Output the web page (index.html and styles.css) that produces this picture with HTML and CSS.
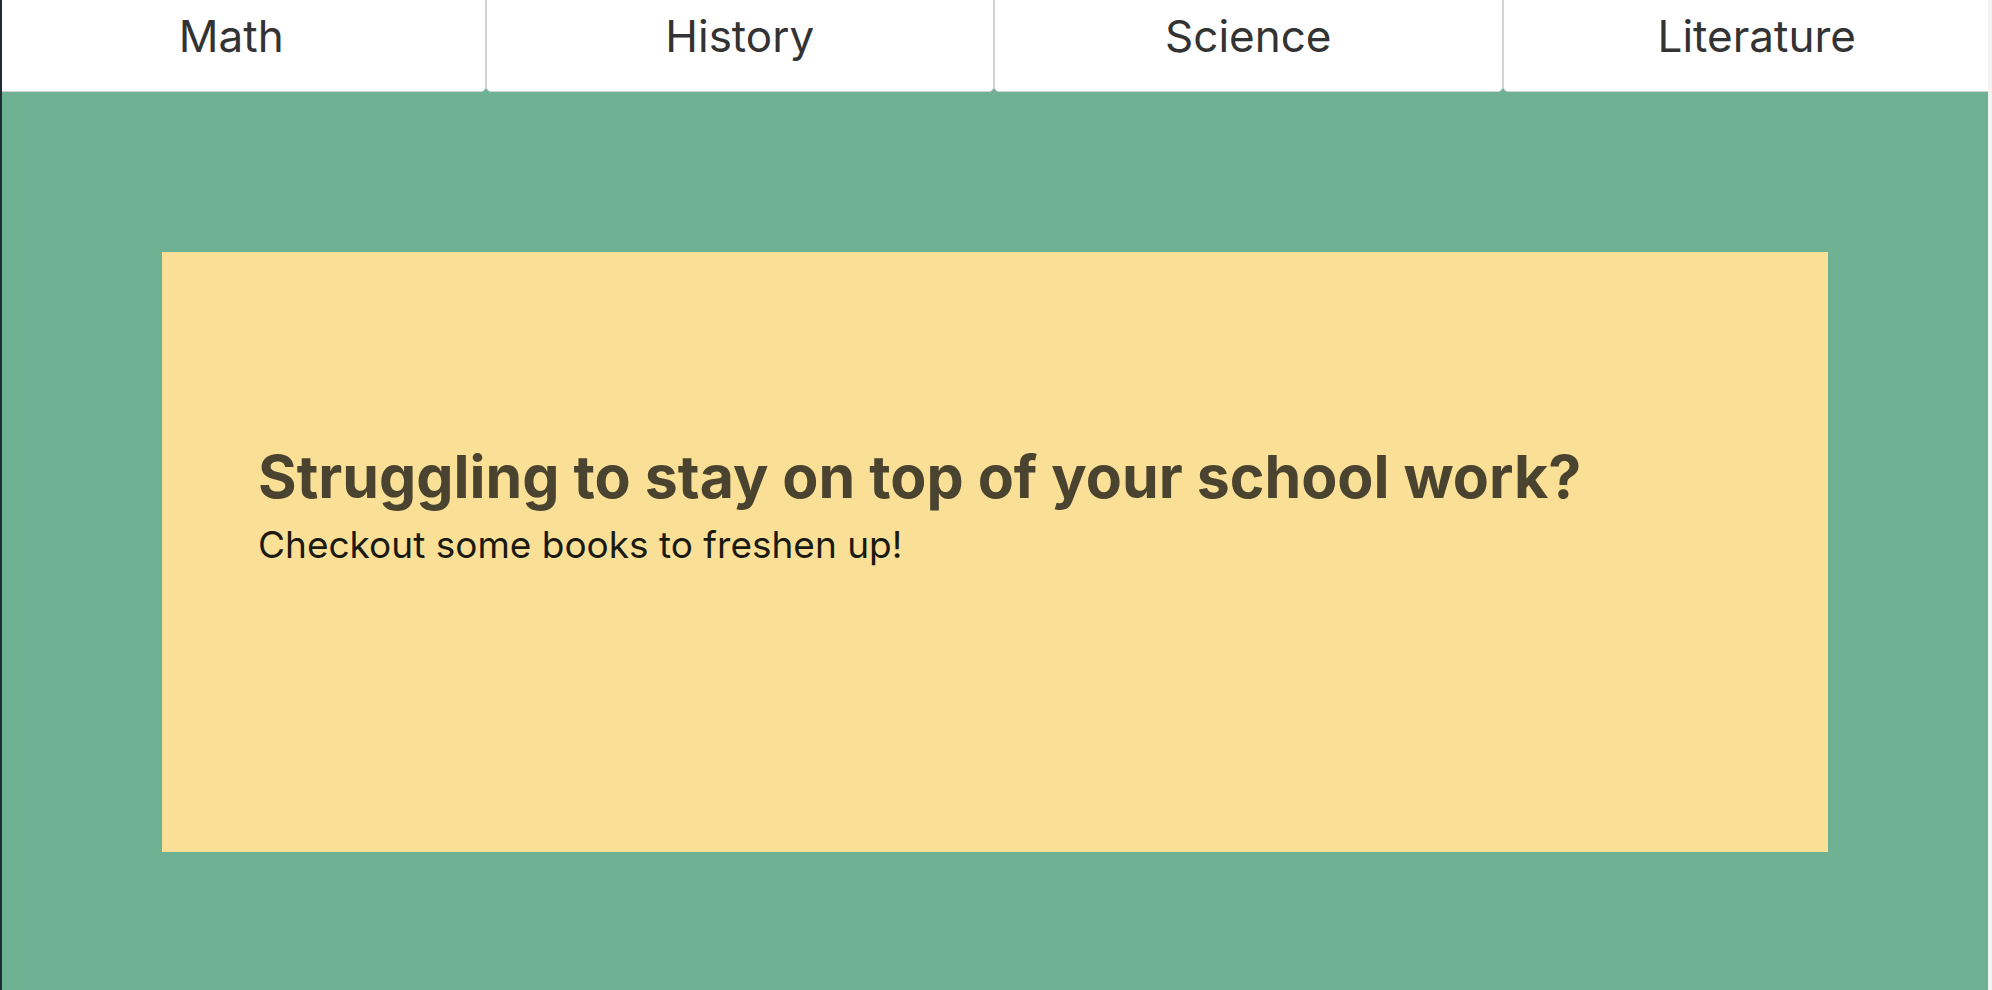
FILE: index.html
```html
<!DOCTYPE html>
<html lang="en">
<head>
<meta charset="utf-8">
<title>School Books</title>
<link rel="stylesheet" href="styles.css">
</head>
<body>
<div class="page">
  <nav class="tabs">
    <a class="tab" href="#">Math</a>
    <a class="tab" href="#">History</a>
    <a class="tab" href="#">Science</a>
    <a class="tab" href="#">Literature</a>
  </nav>
  <main class="stage">
    <section class="hero">
      <h1 class="hero-title">Struggling to stay on top of your school work?</h1>
      <p class="hero-sub">Checkout some books to freshen up!</p>
    </section>
  </main>
</div>
</body>
</html>
```

FILE: styles.css
```css
html, body {
  margin: 0;
  padding: 0;
  height: 100%;
  overflow: hidden;
}

body {
  background: #f3f3f3;
  font-family: Inter, "Liberation Sans", sans-serif;
}

.page {
  height: 100%;
  width: 1986px;
  border-left: 2px solid #1f2a33;
  background: #6db192;
  overflow: hidden;
}

.tabs {
  display: flex;
  margin-left: -25px;
  margin-top: -1.5px;
}

.tab {
  flex: 0 0 508.5px;
  box-sizing: border-box;
  height: 93px;
  padding-top: 9px;
  background: #ffffff;
  border: 1.5px solid #d4d4d4;
  border-radius: 0 0 5px 5px;
  color: #333333;
  font-size: 44px;
  text-align: center;
  text-decoration: none;
}

.stage {
  padding: 160px 160px;
}

.hero {
  box-sizing: border-box;
  height: 600px;
  background: #fae096;
  padding: 189.5px 96px 0;
}

.hero-title {
  margin: 0;
  font-size: 59px;
  font-weight: 700;
  line-height: 72px;
  color: #4a4330;
}

.hero-sub {
  margin: 8px 0 0;
  font-size: 37px;
  line-height: 48px;
  color: #1b1a12;
}
```
